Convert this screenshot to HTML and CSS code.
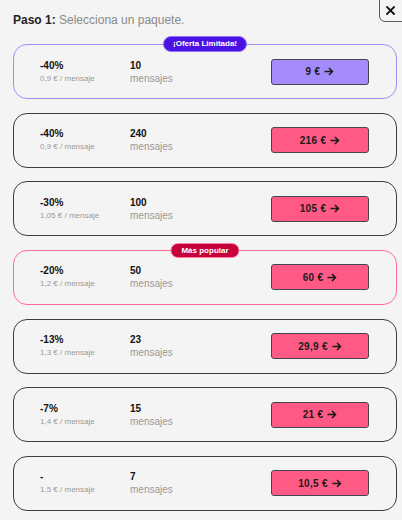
FILE: index.html
```html
<!DOCTYPE html>
<html lang="es">
<head>
<meta charset="utf-8">
<link rel="stylesheet" href="styles.css">
</head>
<body>
<div class="page">
  <button class="close" aria-label="Cerrar">
    <svg width="9" height="9" viewBox="0 0 9 9"><path d="M1 1 L8 8 M8 1 L1 8" stroke="#111" stroke-width="1.8" stroke-linecap="square"/></svg>
  </button>
  <h1 class="title"><b>Paso 1:</b> Selecciona un paquete.</h1>
  <div class="list">
    <div class="card card-offer">
      <span class="badge badge-offer">¡Oferta Limitada!</span>
      <div class="col-disc"><div class="disc">-40%</div><div class="per">0,9 € / mensaje</div></div>
      <div class="col-msg"><div class="num">10</div><div class="lbl">mensajes</div></div>
      <button class="buy buy-offer">9 €<svg class="arr" width="10" height="9" viewBox="0 0 10 9"><path d="M0.5 4.5 H8.5 M5 1 L8.5 4.5 L5 8" fill="none" stroke="#1a1a1a" stroke-width="1.5"/></svg></button>
    </div>
    <div class="card">
      <div class="col-disc"><div class="disc">-40%</div><div class="per">0,9 € / mensaje</div></div>
      <div class="col-msg"><div class="num">240</div><div class="lbl">mensajes</div></div>
      <button class="buy">216 €<svg class="arr" width="10" height="9" viewBox="0 0 10 9"><path d="M0.5 4.5 H8.5 M5 1 L8.5 4.5 L5 8" fill="none" stroke="#1a1a1a" stroke-width="1.5"/></svg></button>
    </div>
    <div class="card">
      <div class="col-disc"><div class="disc">-30%</div><div class="per">1,05 € / mensaje</div></div>
      <div class="col-msg"><div class="num">100</div><div class="lbl">mensajes</div></div>
      <button class="buy">105 €<svg class="arr" width="10" height="9" viewBox="0 0 10 9"><path d="M0.5 4.5 H8.5 M5 1 L8.5 4.5 L5 8" fill="none" stroke="#1a1a1a" stroke-width="1.5"/></svg></button>
    </div>
    <div class="card card-popular">
      <span class="badge badge-popular">Más popular</span>
      <div class="col-disc"><div class="disc">-20%</div><div class="per">1,2 € / mensaje</div></div>
      <div class="col-msg"><div class="num">50</div><div class="lbl">mensajes</div></div>
      <button class="buy">60 €<svg class="arr" width="10" height="9" viewBox="0 0 10 9"><path d="M0.5 4.5 H8.5 M5 1 L8.5 4.5 L5 8" fill="none" stroke="#1a1a1a" stroke-width="1.5"/></svg></button>
    </div>
    <div class="card">
      <div class="col-disc"><div class="disc">-13%</div><div class="per">1,3 € / mensaje</div></div>
      <div class="col-msg"><div class="num">23</div><div class="lbl">mensajes</div></div>
      <button class="buy">29,9 €<svg class="arr" width="10" height="9" viewBox="0 0 10 9"><path d="M0.5 4.5 H8.5 M5 1 L8.5 4.5 L5 8" fill="none" stroke="#1a1a1a" stroke-width="1.5"/></svg></button>
    </div>
    <div class="card">
      <div class="col-disc"><div class="disc">-7%</div><div class="per">1,4 € / mensaje</div></div>
      <div class="col-msg"><div class="num">15</div><div class="lbl">mensajes</div></div>
      <button class="buy">21 €<svg class="arr" width="10" height="9" viewBox="0 0 10 9"><path d="M0.5 4.5 H8.5 M5 1 L8.5 4.5 L5 8" fill="none" stroke="#1a1a1a" stroke-width="1.5"/></svg></button>
    </div>
    <div class="card">
      <div class="col-disc"><div class="disc">-</div><div class="per">1,5 € / mensaje</div></div>
      <div class="col-msg"><div class="num">7</div><div class="lbl">mensajes</div></div>
      <button class="buy">10,5 €<svg class="arr" width="10" height="9" viewBox="0 0 10 9"><path d="M0.5 4.5 H8.5 M5 1 L8.5 4.5 L5 8" fill="none" stroke="#1a1a1a" stroke-width="1.5"/></svg></button>
    </div>
  </div>
</div>
</body>
</html>
```

FILE: styles.css
```css
* { box-sizing: border-box; }
html, body {
  margin: 0;
  padding: 0;
  background: #f4f4f4;
  font-family: "Liberation Sans", Arial, sans-serif;
}
.page {
  position: relative;
  width: 402px;
  height: 520px;
  overflow: hidden;
  padding: 12px 5px 0 13px;
}
.close {
  position: absolute;
  top: -6px;
  right: -6px;
  width: 29px;
  height: 28px;
  padding: 5px 6px 0 0;
  border: 1px solid #5a5a5a;
  border-radius: 6px;
  background: #f4f4f4;
  display: flex;
  align-items: center;
  justify-content: center;
}
.title {
  margin: 0 0 16px;
  font-size: 12px;
  line-height: 16px;
  font-weight: normal;
  color: #8a8a8a;
}
.title b { color: #222; font-weight: bold; }
.list {
  display: flex;
  flex-direction: column;
  gap: 13.67px;
  width: 384px;
}
.card {
  position: relative;
  height: 55px;
  border: 1px solid #3c3c44;
  border-radius: 14px;
  display: flex;
  align-items: center;
  padding: 0 27px 0 26px;
}
.card-offer { border-color: #a58cf8; }
.card-popular { border-color: #ff6e95; }
.badge {
  position: absolute;
  top: -9px;
  left: 50%;
  transform: translateX(-50%);
  height: 16px;
  padding: 0 9px;
  border-radius: 8px;
  font-size: 8px;
  font-weight: bold;
  line-height: 14px;
  color: #fff;
  white-space: nowrap;
}
.badge-offer { background: #4a12e3; border: 1px solid #8f72f2; }
.badge-popular { background: #c5003c; border: 1px solid #ff7fa0; top: -8px; height: 15px; line-height: 13px; padding: 0 10px; }
.col-disc { width: 90px; }
.col-msg { flex: 1; }
.disc, .num {
  font-size: 10px;
  font-weight: bold;
  line-height: 13px;
  color: #111;
}
.per {
  font-size: 8px;
  line-height: 13px;
  color: #9a9a9a;
}
.lbl {
  font-size: 10px;
  line-height: 13px;
  color: #999;
}
.buy {
  width: 98px;
  height: 26px;
  border: 1px solid #454550;
  border-radius: 3px;
  background: #ff5a86;
  font-family: "Liberation Sans", Arial, sans-serif;
  font-size: 10px;
  font-weight: bold;
  letter-spacing: 0.3px;
  color: #1a1a1a;
  padding: 0;
  display: flex;
  align-items: center;
  justify-content: center;
  gap: 4px;
}
.buy-offer { background: #a38bfa; }
.arr { display: block; }
```
